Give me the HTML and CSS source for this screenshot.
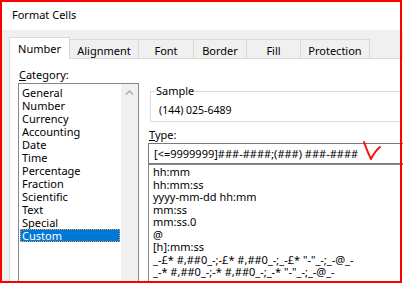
FILE: index.html
```html
<!DOCTYPE html>
<html>
<head>
<meta charset="utf-8">
<link rel="stylesheet" href="styles.css">
</head>
<body>
<div class="window">
  <div class="titlebar">Format Cells</div>
  <div class="dialog">
    <div class="tabs">
      <div class="tab active t-number">Number</div>
      <div class="tab t-align">Alignment</div>
      <div class="tab t-font">Font</div>
      <div class="tab t-border">Border</div>
      <div class="tab t-fill">Fill</div>
      <div class="tab t-prot">Protection</div>
    </div>
    <div class="page">
      <div class="cat-col">
        <div class="label"><u>C</u>ategory:</div>
        <div class="cat-list">
          <ul class="items">
            <li>General</li>
            <li>Number</li>
            <li>Currency</li>
            <li>Accounting</li>
            <li>Date</li>
            <li>Time</li>
            <li>Percentage</li>
            <li>Fraction</li>
            <li>Scientific</li>
            <li>Text</li>
            <li>Special</li>
            <li class="selected">Custom</li>
          </ul>
          <div class="scrollbar">
            <svg class="arrow" width="17" height="17" viewBox="0 0 17 17"><path d="M5 10.5 L8.5 7 L12 10.5" fill="none" stroke="#a8a8a8" stroke-width="1.3"/></svg>
          </div>
        </div>
      </div>
      <div class="main-col">
        <div class="sample">
          <div class="sample-title">Sample</div>
          <div class="sample-value">(144) 025-6489</div>
        </div>
        <div class="label type-label"><u>T</u>ype:</div>
        <div class="type-input">[&lt;=9999999]###-####;(###) ###-####</div>
        <ul class="type-list">
          <li>hh:mm</li>
          <li>hh:mm:ss</li>
          <li>yyyy-mm-dd hh:mm</li>
          <li>mm:ss</li>
          <li>mm:ss.0</li>
          <li>@</li>
          <li>[h]:mm:ss</li>
          <li>_-£* #,##0_-;-£* #,##0_-;_-£* "-"_-;_-@_-</li>
          <li>_-* #,##0_-;-* #,##0_-;_-* "-"_-;_-@_-</li>
        </ul>
      </div>
    </div>
  </div>
  <svg class="tick" width="403" height="283" viewBox="0 0 403 283"><path d="M364 142 Q367 151 371 159 Q375 151 380 147" fill="none" stroke="#ff1010" stroke-width="2" stroke-linecap="round" stroke-linejoin="round"/></svg>
  <div class="annot-frame"></div>
</div>
</body>
</html>
```
FILE: styles.css
```css
* { box-sizing: border-box; }
body {
  margin: 0;
  width: 403px;
  height: 283px;
  overflow: hidden;
  background: #fff;
  font-family: "Noto Sans", "Open Sans", sans-serif;
  font-size: 11px;
  color: #000;
}
.window {
  position: relative;
  width: 403px;
  height: 283px;
  overflow: hidden;
  background: #f0f0f0;
}
.titlebar {
  height: 30px;
  background: #fff;
  padding-left: 12px;
  line-height: 29px;
}
.dialog { padding: 7px 0 0 9px; }
.tabs {
  display: flex;
  align-items: flex-end;
  height: 21px;
}
.tab {
  height: 19px;
  border: 1px solid #d9d9d9;
  border-bottom: none;
  margin-left: -1px;
  text-align: center;
  padding-top: 3px;
  line-height: 16px;
  background: #f0f0f0;
  white-space: nowrap;
}
.tab.active {
  position: relative;
  z-index: 1;
  height: 22px;
  margin-left: 0;
  margin-bottom: -1px;
  background: #fff;
}
.t-number { width: 61px; }
.t-align { width: 70px; }
.t-font { width: 56px; }
.t-border { width: 54px; }
.t-fill { width: 55px; }
.t-prot { width: 70px; }
.page {
  background: #fff;
  border-top: 1px solid #d9d9d9;
  border-left: 1px solid #d9d9d9;
  width: 420px;
  height: 240px;
  display: flex;
  padding: 9px 0 0 8px;
}
.cat-col {
  width: 121px;
  flex: none;
  display: flex;
  flex-direction: column;
}
.label {
  line-height: 13px;
  padding-left: 1px;
}
.cat-list {
  margin-top: 2px;
  border: 1px solid #828790;
  display: flex;
  height: 220px;
}
.items {
  list-style: none;
  margin: 0;
  padding: 2px 1px 0 1px;
  flex: 1;
}
.items li {
  height: 13px;
  line-height: 13px;
  padding-left: 2px;
  white-space: nowrap;
}
.items li.selected {
  background: #0078d7;
  color: #fff;
  outline: 1px dotted #f5a050;
  outline-offset: -1px;
}
.scrollbar {
  width: 17px;
  flex: none;
  background: #f0f0f0;
}
.arrow { display: block; }
.main-col {
  margin-left: 9px;
  width: 270px;
  flex: none;
}
.sample {
  margin: 23px 0 0 2px;
  border: 1px solid #dcdcdc;
  height: 31px;
  padding: 0 0 0 8px;
}
.sample-title {
  width: max-content;
  margin: -7px 0 0 -4px;
  padding: 0 1px;
  background: #fff;
  line-height: 12px;
}
.sample-value {
  margin-top: 7px;
  line-height: 13px;
  font-size: 10.5px;
}
.type-label { margin-top: 6px; }
.type-input {
  margin-top: 2px;
  height: 21px;
  border: 1px solid #7a7a7a;
  padding-left: 5px;
  line-height: 17px;
  padding-top: 1px;
  white-space: nowrap;
}
.type-list {
  list-style: none;
  margin: 0;
  border: 1px solid #828790;
  padding: 1px 0 0 4px;
  height: 130px;
}
.type-list li {
  line-height: 12.5px;
  white-space: nowrap;
}
.tick {
  position: absolute;
  left: 0;
  top: 0;
  pointer-events: none;
}
.annot-frame {
  position: absolute;
  left: 0;
  top: 0;
  width: 402px;
  height: 283px;
  border: 2px solid #f00;
  pointer-events: none;
}
```
